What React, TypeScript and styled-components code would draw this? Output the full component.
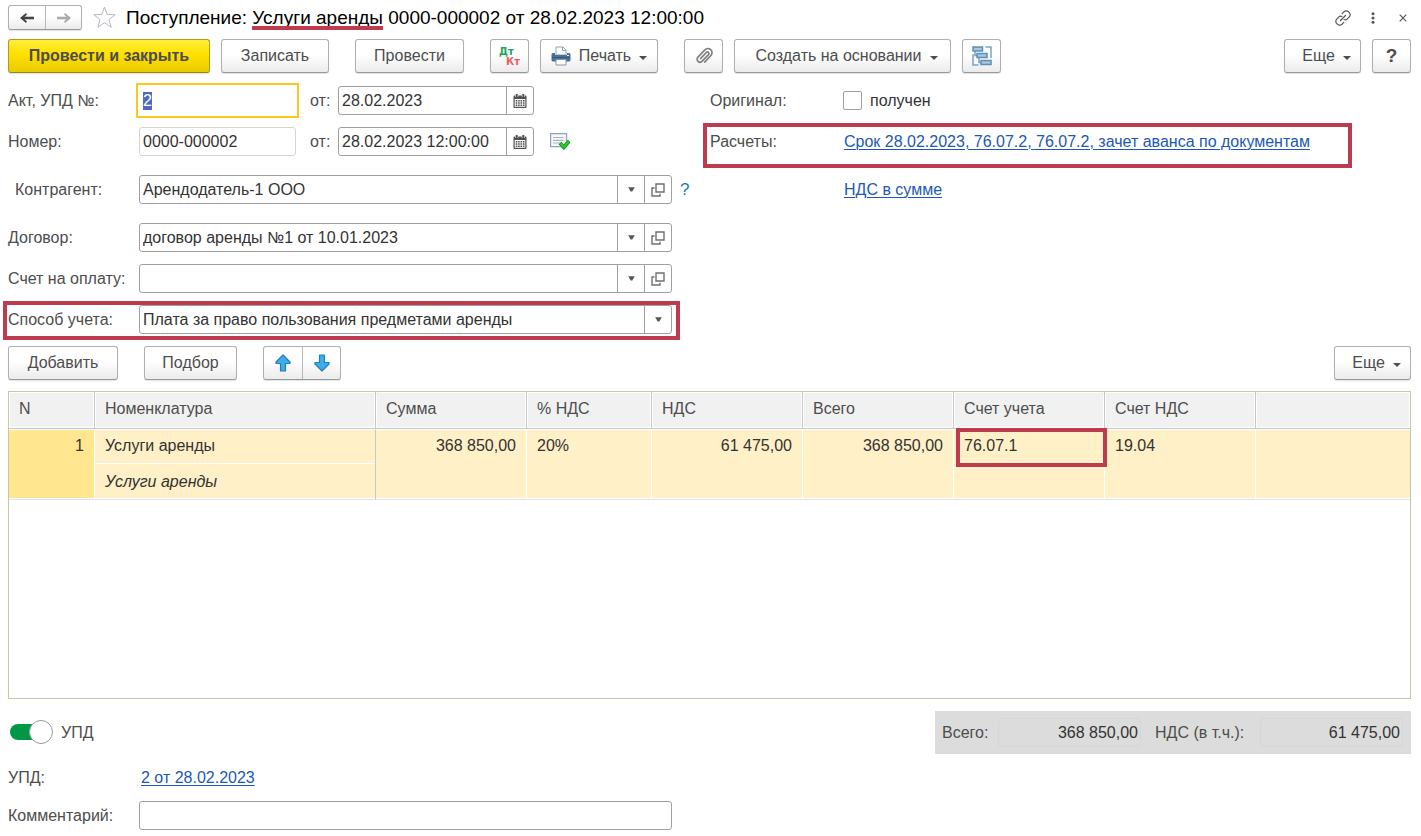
import React, { useEffect, useRef } from "react";
import styled, { createGlobalStyle, css } from "styled-components";

const ink = "#333333";
const muted = "#4d4d4d";
const line = "#a0a0a0";
const mark = "#bd3b4f";
const blue = "#1d58b5";

const GlobalStyle = createGlobalStyle`
  *, *::before, *::after { box-sizing: border-box; }
  body { margin: 0; background: #ffffff; }
  body, button, input, select {
    font-family: "Liberation Sans", Arial, sans-serif;
    font-size: 16px;
    line-height: 20px;
    color: ${ink};
  }
`;

const Page = styled.main`
  display: flex;
  flex-direction: column;
  min-height: 100vh;
  padding: 5px 10px 6px 8px;
`;

/* Title bar */

const TitleBar = styled.header`
  display: flex;
  align-items: center;
  height: 25px;
  margin-bottom: 9px;
`;

const raised = css`
  border: 1px solid #b0b0b0;
  border-bottom-color: #999999;
  border-radius: 3px;
  background: linear-gradient(#ffffff 45%, #ebebeb);
  box-shadow: 0 1px 1px rgba(0, 0, 0, 0.12);
`;

const ButtonPair = styled.div<{ $height: number }>`
  ${raised}
  display: flex;
  height: ${(p) => p.$height}px;
`;

const PairButton = styled.button<{ $width: number }>`
  display: flex;
  align-items: center;
  justify-content: center;
  width: ${(p) => p.$width}px;
  padding: 0;
  border: 0;
  background: transparent;

  & + & {
    border-left: 1px solid #b8b8b8;
  }
`;

const PlainButton = styled.button`
  display: flex;
  align-items: center;
  justify-content: center;
  min-width: 16px;
  height: 24px;
  padding: 0;
  border: 0;
  background: transparent;
`;

const StarButton = styled(PlainButton)`
  margin: 0 10px 0 11px;
`;

const Title = styled.h1`
  flex: 1;
  margin: 0;
  font-size: 19px;
  line-height: 24px;
  font-weight: 400;
  white-space: nowrap;
  color: #000000;
`;

const Underscored = styled.span`
  position: relative;

  &::after {
    content: "";
    position: absolute;
    left: 0;
    right: 0;
    bottom: -2px;
    height: 4px;
    background: ${mark};
  }
`;

const WindowTools = styled.div`
  display: flex;
  gap: 14px;
`;

/* Command bars */

const Bar = styled.div`
  display: flex;
  justify-content: space-between;
`;

const BarSide = styled.div`
  display: flex;
  gap: 26px;
`;

const ButtonGroup = styled.div`
  display: flex;
  gap: 11px;
`;

const Button = styled.button<{ $width: number; $primary?: boolean }>`
  ${raised}
  display: flex;
  align-items: center;
  justify-content: center;
  gap: 8px;
  width: ${(p) => p.$width}px;
  height: 34px;
  padding: 0;
  color: ${muted};
  white-space: nowrap;
  ${(p) =>
    p.$primary &&
    css`
      border-color: #b09c1c;
      border-bottom-color: #94841a;
      background: linear-gradient(#ffee3c, #ffe000 45%, #e8cb00);
      font-weight: 700;
    `}
`;

const Help = styled.b`
  font-size: 19px;
`;

const MenuLabel = styled.span`
  padding-left: 8px;
`;

/* Form */

const Form = styled.section`
  display: grid;
  grid-template-columns: minmax(0, 702px) minmax(0, 1fr);
  margin: 13px 0 12px;
`;

const Stack = styled.div<{ $gap: number }>`
  display: flex;
  flex-direction: column;
  gap: ${(p) => p.$gap}px;
`;

const Row = styled.div`
  position: relative;
  display: flex;
  align-items: center;
  height: 29px;
`;

const Label = styled.label<{ $width?: number; $indent?: boolean }>`
  flex: none;
  width: ${(p) => p.$width ?? 131}px;
  padding-left: ${(p) => (p.$indent ? 7 : 0)}px;
  color: ${muted};
  white-space: nowrap;
`;

const Caption = styled(Label).attrs({ as: "span" })``;

const InnerLabel = styled.label`
  width: 42px;
  padding-left: 14px;
  color: ${muted};
`;

const frame = css`
  height: 29px;
  border: 1px solid ${line};
  border-radius: 3px;
  background: #ffffff;
`;

const TextBox = styled.input<{ $width: number; $quiet?: boolean }>`
  ${frame}
  flex: 0 1 ${(p) => p.$width}px;
  width: ${(p) => p.$width}px;
  min-width: 0;
  padding: 0 3px;
  border-color: ${(p) => (p.$quiet ? "#d4d4d4" : line)};
  outline: none;
`;

const FocusedBox = styled(TextBox)`
  border-color: transparent;
  border-radius: 0;
  outline: 2px solid #fac81e;
  outline-offset: 1px;

  &::selection {
    background: #4f68c0;
    color: #ffffff;
  }
`;

const Combo = styled.div<{ $width: number }>`
  ${frame}
  display: flex;
  flex: 0 1 ${(p) => p.$width}px;
  min-width: 0;
`;

const ComboInput = styled.input`
  flex: 1;
  min-width: 0;
  padding: 0 3px;
  border: 0;
  outline: none;
  background: transparent;
`;

const ComboButton = styled.button`
  display: flex;
  align-items: center;
  justify-content: center;
  flex: none;
  width: 27px;
  padding: 0;
  border: 0;
  border-left: 1px solid ${line};
  background: transparent;
`;

const SelectBox = styled.div`
  ${frame}
  display: grid;
  grid-template-columns: 1fr 27px;
  flex: 0 1 533px;
  min-width: 0;
`;

const Select = styled.select`
  grid-area: 1 / 1 / 2 / 3;
  min-width: 0;
  padding: 0 30px 0 3px;
  border: 0;
  outline: none;
  appearance: none;
  background: transparent;
`;

const SelectArrow = styled.span`
  grid-area: 1 / 2 / 2 / 3;
  display: flex;
  align-items: center;
  justify-content: center;
  border-left: 1px solid ${line};
  pointer-events: none;
`;

const StatusButton = styled(PlainButton)`
  margin-left: 16px;
`;

const HintLink = styled.a`
  margin-left: 8px;
  font-size: 17px;
  color: #0f7ac4;
  text-decoration: none;
`;

const Link = styled.a`
  color: ${blue};
  text-decoration: underline;
  text-decoration-thickness: 1px;
  text-underline-offset: 2px;
  white-space: nowrap;
`;

const Tick = styled.input`
  flex: none;
  width: 19px;
  height: 19px;
  margin: 0 8px 0 0;
  border: 1px solid ${line};
  border-radius: 2px;
  appearance: none;
  background: #ffffff;
`;

/* Red marker frames drawn over the form */

const Marker = styled.span<{ $inset: string }>`
  position: absolute;
  z-index: 1;
  inset: ${(p) => p.$inset};
  border: 4px solid ${mark};
  pointer-events: none;
`;

/* Item table */

const TablePanel = styled.section`
  flex: 1 0 200px;
  margin: 11px 0 12px;
  border: 1px solid #c9c5a8;
`;

const Table = styled.table`
  width: 100%;
  table-layout: fixed;
  border-collapse: separate;
  border-spacing: 0;
`;

const Col = styled.col<{ $width?: number }>`
  width: ${(p) => (p.$width ? `${p.$width}px` : "auto")};
`;

const Th = styled.th`
  height: 37px;
  padding: 0 10px 2px;
  border-right: 1px solid #c8c8c8;
  border-bottom: 1px solid #c4c8cc;
  background: #f1f1f1;
  box-shadow: inset 0 0 0 1px #ffffff;
  font-weight: 400;
  text-align: left;
  color: ${muted};

  &:last-child {
    border-right: 0;
  }
`;

const Td = styled.td<{ $end?: boolean; $tone?: "number" | "name" }>`
  position: relative;
  padding: 6px 10px 0;
  border-top: 1px solid #ffffff;
  border-right: 1px solid ${(p) => (p.$tone === "name" ? "#c8c8c8" : "#ffffff")};
  border-bottom: 1px solid #dfe3e9;
  background: ${(p) => (p.$tone === "number" ? "#ffe68f" : "#fff0c8")};
  box-shadow: inset 0 -1px 0 #ffffff;
  text-align: ${(p) => (p.$end ? "right" : "left")};
  vertical-align: top;
  white-space: nowrap;

  &:last-child {
    border-right: ${(p) => (p.$tone === "name" ? "1px solid #c8c8c8" : "0")};
  }
`;

const NameCell = styled(Td)`
  height: 35px;
  border-bottom: 0;
`;

const DetailCell = styled(Td)`
  height: 36px;
  padding-top: 8px;
  border-top: 0;
  font-style: italic;
`;

/* Footer */

const Footer = styled.footer`
  display: flex;
  flex-direction: column;
  gap: 9px;
`;

const Summary = styled.div`
  display: flex;
  align-items: center;
  justify-content: space-between;
`;

const SwitchLabel = styled.label`
  display: flex;
  align-items: center;
  gap: 8px;
  padding-left: 2px;
  color: ${muted};
`;

const Switch = styled.input`
  position: relative;
  width: 43px;
  height: 25px;
  margin: 0;
  appearance: none;

  &::before {
    content: "";
    position: absolute;
    inset: 4px 6px 5px 0;
    border-radius: 8px;
    background: #009846;
  }

  &::after {
    content: "";
    position: absolute;
    top: 0;
    right: 0;
    width: 24px;
    height: 24px;
    border: 1px solid #999999;
    border-radius: 50%;
    background: #ffffff;
  }
`;

const Totals = styled.div`
  display: flex;
  align-items: center;
  padding: 7px 8px 7px 7px;
  background: #dcdcdc;
`;

const TotalLabel = styled.label<{ $width: number }>`
  width: ${(p) => p.$width}px;
  color: ${muted};
  white-space: nowrap;
`;

const TotalBox = styled.input`
  width: 143px;
  height: 29px;
  padding: 0 2px;
  border: 1px solid #d6d6d6;
  border-radius: 3px;
  outline: none;
  background: transparent;
  text-align: right;

  & + label {
    margin-left: 14px;
  }
`;

/* Icons */

const NavArrow = ({ color, flip }: { color: string; flip?: boolean }) => (
  <svg width="16" height="12" viewBox="0 0 16 12" aria-hidden="true">
    <path
      d={flip ? "M1 6h11" : "M15 6H4"}
      fill="none"
      stroke={color}
      strokeWidth="2.6"
    />
    <path
      d={flip ? "M9 1l6 5-6 5-1-1.600L11.500 6 8 2.600z" : "M7 1L1 6l6 5 1-1.600L4.500 6 8 2.600z"}
      fill={color}
    />
  </svg>
);

const StarIcon = () => (
  <svg width="23" height="23" viewBox="0 0 23 23" aria-hidden="true">
    <path
      d="M11.5 1l2.7 7.5 8 .2-6.3 4.900 2.300 7.700-6.700-4.500-6.700 4.500 2.300-7.700L.8 8.700l8-.2z"
      fill="#ffffff"
      stroke="#b4b8be"
    />
  </svg>
);

const ChainIcon = () => (
  <svg width="16" height="16" viewBox="0 0 16 16" aria-hidden="true">
    <g fill="none" stroke="#555555" strokeWidth="1.2" strokeLinecap="round">
      <path d="M7.200 3.600l1.900-1.900a3 3 0 0 1 4.300 0l.9.900a3 3 0 0 1 0 4.300l-2.200 2.200a2.600 2.600 0 0 1-3 .4" />
      <path d="M8.800 12.400l-1.900 1.900a3 3 0 0 1-4.300 0l-.9-.9a3 3 0 0 1 0-4.300l2.200-2.200a2.600 2.600 0 0 1 3-.4" />
      <path d="M5.500 10.500l5-5" />
    </g>
  </svg>
);

const DotsIcon = () => (
  <svg width="4" height="12" viewBox="0 0 4 12" aria-hidden="true">
    <g fill="#555555">
      <circle cx="2" cy="1.700" r="1.500" />
      <circle cx="2" cy="6" r="1.500" />
      <circle cx="2" cy="10.300" r="1.500" />
    </g>
  </svg>
);

const CloseIcon = () => (
  <svg width="8" height="8" viewBox="0 0 8 8" aria-hidden="true">
    <path d="M.7.7l6.600 6.600M7.300.7L.7 7.300" stroke="#555555" strokeWidth="1.200" />
  </svg>
);

const Caret = () => (
  <svg width="8" height="4" viewBox="0 0 8 4" aria-hidden="true">
    <path d="M0 0h8L4 4z" fill="#4d4d4d" />
  </svg>
);

const MenuCaret = styled.span`
  display: flex;
  padding-top: 4px;
`;

const SmallCaret = () => (
  <svg width="7" height="5" viewBox="0 0 7 5" aria-hidden="true">
    <path d="M.2.300h6.600L4.300 4.500H2.700z" fill="#555555" />
  </svg>
);

const DebitCreditIcon = () => (
  <svg width="22" height="22" viewBox="0 0 22 22" aria-hidden="true">
    <g fontFamily="DejaVu Sans, sans-serif" fontSize="10" fontWeight="700">
      <text x="0" y="10" fill="#1fa35c">Дт</text>
      <text x="7" y="20" fill="#ee5a5a">Кт</text>
    </g>
  </svg>
);

const PrinterIcon = () => (
  <svg width="20" height="20" viewBox="0 0 20 20" aria-hidden="true">
    <path d="M5 9V1h7l3 3v5z" fill="#ffffff" stroke="#8fa3b5" />
    <path d="M11.500 1v3.500H15" fill="none" stroke="#8fa3b5" />
    <path d="M2 7h2v2h12V7h2a1.500 1.500 0 0 1 1.500 1.500V14a1.500 1.500 0 0 1-1.500 1.500H2A1.500 1.500 0 0 1 .5 14V8.500A1.500 1.500 0 0 1 2 7z" fill="#4a7096" />
    <path d="M1 11h18v1H1z" fill="#345a80" />
    <path d="M5 13.500h10V19H5z" fill="#ffffff" stroke="#7f97ad" />
    <path d="M16 9.500h2" stroke="#ffffff" />
  </svg>
);

const ClipIcon = () => (
  <svg width="18" height="18" viewBox="0 0 18 18" aria-hidden="true">
    <path
      d="M5.500 11.700l5.800-6.200a1.500 1.500 0 0 1 2.200 2.100l-6.300 6.600a2.900 2.900 0 0 1-4.300-4l7-7.300a4.100 4.100 0 0 1 6 5.600l-6.200 6.700"
      fill="none"
      stroke="#808080"
      strokeWidth="1.700"
      strokeLinecap="round"
    />
  </svg>
);

const StructureIcon = () => (
  <svg width="20" height="20" viewBox="0 0 20 20" aria-hidden="true">
    <g fill="none" stroke="#7ba5c4" strokeWidth="1.500">
      <path d="M13.500 1H19v11M1 8v11h5.500M3 5v4.500h2M7 11.500v5h2" />
    </g>
    <g fill="#a9c6dc" stroke="#5b8fb5" strokeWidth="1.500">
      <path d="M1 1h9.500v4H1z" />
      <path d="M5 7.500h10v4H5z" />
      <path d="M9 14.500h10v4H9z" />
    </g>
  </svg>
);

const CalendarIcon = () => (
  <svg width="14" height="14" viewBox="0 0 14 14" aria-hidden="true">
    <path d="M1.500 1.500h11a1 1 0 0 1 1 1V13a1 1 0 0 1-1 1h-11a1 1 0 0 1-1-1V2.500a1 1 0 0 1 1-1z" fill="#505050" />
    <path d="M1.700 5h10.600v7.800H1.700z" fill="#ffffff" />
    <path d="M3.700 0v3M10.300 0v3" stroke="#ffffff" strokeWidth="3" />
    <path d="M3.700 0v3M10.300 0v3" stroke="#505050" strokeWidth="2" />
    <path d="M2.700 6.700h8.800M2.700 9h8.800M2.700 11.300h8.800" stroke="#505050" strokeWidth="1.500" strokeDasharray="1.600 0.800" />
  </svg>
);

const OpenIcon = () => (
  <svg width="14" height="14" viewBox="0 0 14 14" aria-hidden="true">
    <g fill="none" stroke="#707070" strokeWidth="1.400">
      <path d="M5 1h8v8H5z" />
      <path d="M3.500 5H1v8h8V10.800" />
    </g>
  </svg>
);

const PostedIcon = () => (
  <svg width="20" height="17" viewBox="0 0 20 17" aria-hidden="true">
    <path d="M.6.600h16v13H.6z" fill="#f5f9fc" stroke="#8ea3b5" strokeWidth="1.200" />
    <path d="M3 4.500h10.500M3 7.300h10.500M3 10h7" stroke="#a9b6c2" strokeWidth="1.200" />
    <path d="M10 10l3.800 4.300 5.400-6.300" fill="none" stroke="#169a22" strokeWidth="3.800" />
    <path d="M10.700 10.700l3.100 3.200 4.700-5.400" fill="none" stroke="#36c436" strokeWidth="2" />
  </svg>
);

const MoveArrow = ({ down }: { down?: boolean }) => (
  <svg width="16" height="18" viewBox="0 0 16 18" aria-hidden="true">
    <path
      d={
        down
          ? "M5.500 1h5v7.500H15v1.500L8 17 1 10V8.500h4.500z"
          : "M5.500 17h5V9.500H15V8L8 1 1 8v1.500h4.500z"
      }
      fill="#3daee9"
      stroke="#1f7fb8"
      strokeWidth="1.200"
      strokeLinejoin="round"
    />
  </svg>
);

/* Composite controls */

const MoreButton = () => (
  <Button type="button" $width={77}>
    <MenuLabel>Еще</MenuLabel>
    <MenuCaret>
      <Caret />
    </MenuCaret>
  </Button>
);

const DateBox = ({ id, value }: { id: string; value: string }) => (
  <Combo $width={196}>
    <ComboInput id={id} defaultValue={value} />
    <ComboButton type="button" aria-label="Календарь">
      <CalendarIcon />
    </ComboButton>
  </Combo>
);

const LookupBox = ({ id, value }: { id: string; value: string }) => (
  <Combo $width={533}>
    <ComboInput id={id} defaultValue={value} />
    <ComboButton type="button" aria-label="Выбрать">
      <SmallCaret />
    </ComboButton>
    <ComboButton type="button" aria-label="Открыть">
      <OpenIcon />
    </ComboButton>
  </Combo>
);

const columns: { title: string; width?: number }[] = [
  { title: "N", width: 86 },
  { title: "Номенклатура", width: 281 },
  { title: "Сумма", width: 151 },
  { title: "% НДС", width: 125 },
  { title: "НДС", width: 151 },
  { title: "Всего", width: 151 },
  { title: "Счет учета", width: 151 },
  { title: "Счет НДС", width: 151 },
  { title: "" },
];

export default function App() {
  const actNumber = useRef<HTMLInputElement>(null);

  useEffect(() => {
    actNumber.current?.focus();
    actNumber.current?.select();
  }, []);

  return (
    <Page>
      <GlobalStyle />

      <TitleBar>
        <ButtonPair $height={25}>
          <PairButton type="button" $width={36} aria-label="Назад">
            <NavArrow color="#444444" />
          </PairButton>
          <PairButton type="button" $width={36} aria-label="Вперед">
            <NavArrow color="#aaaaaa" flip />
          </PairButton>
        </ButtonPair>
        <StarButton type="button" aria-label="Избранное">
          <StarIcon />
        </StarButton>
        <Title>
          Поступление: <Underscored>Услуги аренды</Underscored> 0000-000002 от
          28.02.2023 12:00:00
        </Title>
        <WindowTools>
          <PlainButton type="button" aria-label="Ссылка">
            <ChainIcon />
          </PlainButton>
          <PlainButton type="button" aria-label="Меню">
            <DotsIcon />
          </PlainButton>
          <PlainButton type="button" aria-label="Закрыть">
            <CloseIcon />
          </PlainButton>
        </WindowTools>
      </TitleBar>

      <Bar>
        <BarSide>
          <ButtonGroup>
            <Button type="button" $width={202} $primary>
              Провести и закрыть
            </Button>
            <Button type="button" $width={108}>Записать</Button>
          </ButtonGroup>
          <Button type="button" $width={109}>Провести</Button>
          <ButtonGroup>
            <Button type="button" $width={39} aria-label="Проводки">
              <DebitCreditIcon />
            </Button>
            <Button type="button" $width={118}>
              <PrinterIcon />
              Печать
              <MenuCaret>
                <Caret />
              </MenuCaret>
            </Button>
          </ButtonGroup>
          <ButtonGroup>
            <Button type="button" $width={39} aria-label="Файлы">
              <ClipIcon />
            </Button>
            <Button type="button" $width={217}>
              <MenuLabel>Создать на основании</MenuLabel>
              <MenuCaret>
                <Caret />
              </MenuCaret>
            </Button>
            <Button type="button" $width={39} aria-label="Структура">
              <StructureIcon />
            </Button>
          </ButtonGroup>
        </BarSide>
        <ButtonGroup>
          <MoreButton />
          <Button type="button" $width={39}>
            <Help>?</Help>
          </Button>
        </ButtonGroup>
      </Bar>

      <Form>
        <Stack $gap={19}>
          <Stack $gap={12}>
            <Row>
              <Label htmlFor="act">Акт, УПД №:</Label>
              <FocusedBox id="act" ref={actNumber} $width={157} defaultValue="2" />
              <InnerLabel htmlFor="act-date">от:</InnerLabel>
              <DateBox id="act-date" value="28.02.2023" />
            </Row>
            <Row>
              <Label htmlFor="number">Номер:</Label>
              <TextBox id="number" $width={157} $quiet defaultValue="0000-000002" />
              <InnerLabel htmlFor="doc-date">от:</InnerLabel>
              <DateBox id="doc-date" value="28.02.2023 12:00:00" />
              <StatusButton type="button" aria-label="Проведен">
                <PostedIcon />
              </StatusButton>
            </Row>
          </Stack>
          <Row>
            <Label htmlFor="partner" $indent>Контрагент:</Label>
            <LookupBox id="partner" value="Арендодатель-1 ООО" />
            <HintLink href="#help">?</HintLink>
          </Row>
          <Stack $gap={12}>
            <Row>
              <Label htmlFor="contract">Договор:</Label>
              <LookupBox id="contract" value="договор аренды №1 от 10.01.2023" />
            </Row>
            <Row>
              <Label htmlFor="invoice">Счет на оплату:</Label>
              <LookupBox id="invoice" value="" />
            </Row>
            <Row>
              <Label htmlFor="method">Способ учета:</Label>
              <SelectBox>
                <Select id="method">
                  <option>Плата за право пользования предметами аренды</option>
                </Select>
                <SelectArrow>
                  <SmallCaret />
                </SelectArrow>
              </SelectBox>
              <Marker $inset="-4px 30px -6px -5px" />
            </Row>
          </Stack>
        </Stack>
        <Stack $gap={19}>
          <Stack $gap={12}>
            <Row>
              <Caption $width={133}>Оригинал:</Caption>
              <Tick id="received" type="checkbox" />
              <label htmlFor="received">получен</label>
            </Row>
            <Row>
              <Caption $width={134}>Расчеты:</Caption>
              <Link href="#settlements">
                Срок 28.02.2023, 76.07.2, 76.07.2, зачет аванса по документам
              </Link>
              <Marker $inset="-4px 59px -12px -7px" />
            </Row>
          </Stack>
          <Row>
            <Caption $width={134} />
            <Link href="#vat">НДС в сумме</Link>
          </Row>
        </Stack>
      </Form>

      <Bar>
        <BarSide>
          <Button type="button" $width={110}>Добавить</Button>
          <Button type="button" $width={93}>Подбор</Button>
          <ButtonPair $height={34}>
            <PairButton type="button" $width={38} aria-label="Переместить вверх">
              <MoveArrow />
            </PairButton>
            <PairButton type="button" $width={38} aria-label="Переместить вниз">
              <MoveArrow down />
            </PairButton>
          </ButtonPair>
        </BarSide>
        <MoreButton />
      </Bar>

      <TablePanel>
        <Table>
          <colgroup>
            {columns.map((c, i) => (
              <Col key={i} $width={c.width} />
            ))}
          </colgroup>
          <thead>
            <tr>
              {columns.map((c, i) => (
                <Th key={i} scope="col">{c.title}</Th>
              ))}
            </tr>
          </thead>
          <tbody>
            <tr>
              <Td rowSpan={2} $end $tone="number">1</Td>
              <NameCell $tone="name">Услуги аренды</NameCell>
              <Td rowSpan={2} $end>368 850,00</Td>
              <Td rowSpan={2}>20%</Td>
              <Td rowSpan={2} $end>61 475,00</Td>
              <Td rowSpan={2} $end>368 850,00</Td>
              <Td rowSpan={2}>
                76.07.1
                <Marker $inset="-2px -3px 32px 2px" />
              </Td>
              <Td rowSpan={2}>19.04</Td>
              <Td rowSpan={2} />
            </tr>
            <tr>
              <DetailCell $tone="name">Услуги аренды</DetailCell>
            </tr>
          </tbody>
        </Table>
      </TablePanel>

      <Footer>
        <Summary>
          <SwitchLabel>
            <Switch type="checkbox" role="switch" defaultChecked />
            УПД
          </SwitchLabel>
          <Totals>
            <TotalLabel htmlFor="total" $width={56}>Всего:</TotalLabel>
            <TotalBox id="total" readOnly value="368 850,00" />
            <TotalLabel htmlFor="vat-total" $width={105}>НДС (в т.ч.):</TotalLabel>
            <TotalBox id="vat-total" readOnly value="61 475,00" />
          </Totals>
        </Summary>
        <Row>
          <Caption $width={133}>УПД:</Caption>
          <Link href="#upd">2 от 28.02.2023</Link>
        </Row>
        <Row>
          <Label htmlFor="comment">Комментарий:</Label>
          <TextBox id="comment" $width={533} />
        </Row>
      </Footer>
    </Page>
  );
}
